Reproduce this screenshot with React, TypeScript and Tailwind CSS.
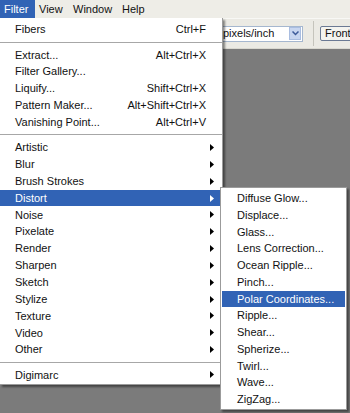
import React from "react";

const Arrow = ({ white }: { white?: boolean }) => (
  <svg width="4" height="7" viewBox="0 0 4 7" className="shrink-0">
    <path d="M0 0 L4 3.5 L0 7 Z" fill={white ? "#ffffff" : "#000000"} />
  </svg>
);

type Item = { label: string; shortcut?: string; sub?: boolean; active?: boolean } | "sep";

const mainItems: Item[] = [
  { label: "Fibers", shortcut: "Ctrl+F" },
  "sep",
  { label: "Extract...", shortcut: "Alt+Ctrl+X" },
  { label: "Filter Gallery..." },
  { label: "Liquify...", shortcut: "Shift+Ctrl+X" },
  { label: "Pattern Maker...", shortcut: "Alt+Shift+Ctrl+X" },
  { label: "Vanishing Point...", shortcut: "Alt+Ctrl+V" },
  "sep",
  { label: "Artistic", sub: true },
  { label: "Blur", sub: true },
  { label: "Brush Strokes", sub: true },
  { label: "Distort", sub: true, active: true },
  { label: "Noise", sub: true },
  { label: "Pixelate", sub: true },
  { label: "Render", sub: true },
  { label: "Sharpen", sub: true },
  { label: "Sketch", sub: true },
  { label: "Stylize", sub: true },
  { label: "Texture", sub: true },
  { label: "Video", sub: true },
  { label: "Other", sub: true },
  "sep",
  { label: "Digimarc", sub: true },
];

const subItems = [
  "Diffuse Glow...",
  "Displace...",
  "Glass...",
  "Lens Correction...",
  "Ocean Ripple...",
  "Pinch...",
  "Polar Coordinates...",
  "Ripple...",
  "Shear...",
  "Spherize...",
  "Twirl...",
  "Wave...",
  "ZigZag...",
];

export default function App() {
  const font = { fontFamily: '"Liberation Sans", Arial, sans-serif' };
  return (
    <div
      className="relative w-[350px] h-[413px] overflow-hidden bg-[#7b7b7b] flex flex-col text-[11px] text-[#111]"
      style={font}
    >
      {/* Menu bar */}
      <div className="h-[18px] bg-[#eeede7] flex items-center">
        <div className="h-full w-[35px] bg-[#3163b5] text-white flex items-center pl-[4px]">Filter</div>
        <div className="pl-[4px] w-[38px]">View</div>
        <div className="w-[49px]">Window</div>
        <div>Help</div>
      </div>
      {/* Toolbar */}
      <div className="h-[31px] bg-[#ebeae4] border-t border-[#f8f8f5] border-b border-b-[#d9d8d0] flex items-center overflow-hidden">
        <div className="shrink-0 ml-[205px] w-[98px] h-[16px] bg-white border border-[#a5b7cf] flex items-center justify-between">
          <span className="pl-[17px] leading-none">pixels/inch</span>
          <div className="w-[12px] h-[13px] mr-[1px] bg-[#c8d6f0] border border-[#a9bde0] flex items-center justify-center">
            <svg width="7" height="5" viewBox="0 0 7 5">
              <path d="M0.5 0.5 L3.5 3.5 L6.5 0.5" stroke="#3c5a99" strokeWidth="1.5" fill="none" />
            </svg>
          </div>
        </div>
        <div className="shrink-0 ml-[10px] w-[1px] h-[25px] bg-[#c5c4bc]" />
        <div className="shrink-0 ml-[6px] w-[60px] h-[15px] pl-[4px] border border-[#6b7a94] rounded-[2px] bg-[#f4f4f0] flex items-center leading-none whitespace-nowrap">
          Front
        </div>
      </div>
      <div className="flex-1 bg-[#7b7b7b]" />

      {/* Filter menu */}
      <div className="absolute left-0 top-[18px] w-[223px] bg-white border-r border-b border-[#9b9b9b] pt-[3px] pb-[1px] shadow-[2px_2px_2px_rgba(0,0,0,0.45)]">
        {mainItems.map((it, i) =>
          it === "sep" ? (
            <div key={i} className="h-[8.5px] flex items-center">
              <div className="w-full h-[1px] bg-[#a7a7a7]" />
            </div>
          ) : (
            <div
              key={i}
              className={`h-[16.85px] flex items-center pl-[15px] pr-[8px] ${
                it.active ? "bg-[#3163b5] text-white" : ""
              }`}
            >
              <span className="flex-1 whitespace-nowrap">{it.label}</span>
              {it.shortcut && <span className="whitespace-nowrap pr-[8px]">{it.shortcut}</span>}
              {it.sub && <Arrow white={it.active} />}
            </div>
          )
        )}
      </div>

      {/* Distort submenu */}
      <div className="absolute left-[220px] top-[187px] w-[127px] bg-white border border-[#9b9b9b] pt-[2px] pb-[1px] shadow-[2px_2px_2px_rgba(0,0,0,0.45)]">
        {subItems.map((s) => (
          <div
            key={s}
            className={`h-[16.75px] flex items-center pl-[15px] mx-[1px] whitespace-nowrap ${
              s === "Polar Coordinates..." ? "bg-[#3163b5] text-white" : ""
            }`}
          >
            {s}
          </div>
        ))}
      </div>
    </div>
  );
}
